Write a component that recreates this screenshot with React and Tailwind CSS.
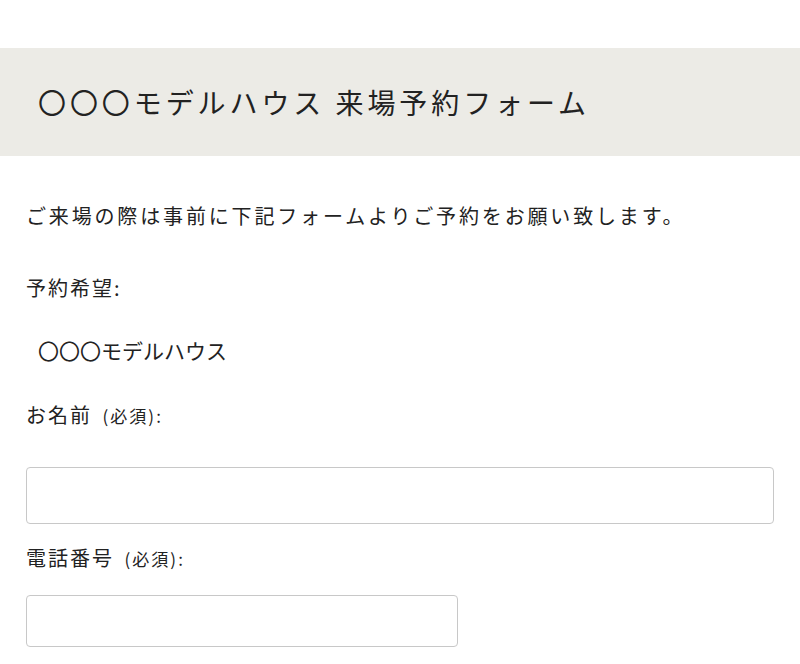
import React from 'react';

const font = { fontFamily: '"Noto Sans CJK JP", "Noto Sans", sans-serif' };

const Field = ({ label, className }) => (
    <div className={className}>
        <p className='text-[20px] leading-[30px] tracking-[0.1em]'>
            {label} <span className='ml-[4px] text-[17px] tracking-[0.12em]'>(必須):</span>
        </p>
    </div>
);

const App = () => {
    return (
        <div className='bg-white text-[#222] min-h-[664px]' style={font}>
            <div className='h-[48px]'></div>
            <div className='bg-[#ecebe6] h-[108px] flex items-center pl-[38px]'>
                <h1 className='text-[28px] tracking-[0.14em] font-normal'>〇〇〇モデルハウス 来場予約フォーム</h1>
            </div>
            <div className='px-[26px]'>
                <p className='mt-[45px] text-[20px] leading-[30px] tracking-[0.142em]'>
                    ご来場の際は事前に下記フォームよりご予約をお願い致します。
                </p>
                <p className='mt-[42px] text-[20px] leading-[30px] tracking-[0.1em]'>予約希望:</p>
                <p className='mt-[32px] pl-[12px] text-[21px] leading-[30px]'>〇〇〇モデルハウス</p>

                <Field label='お名前' className='mt-[35px]' />
                <input
                    type='text'
                    className='mt-[36px] block w-[748px] h-[57px] border border-[#c8c8c8] rounded-[4px] px-3 bg-white'
                />

                <Field label='電話番号' className='mt-[19px]' />
                <input
                    type='tel'
                    className='mt-[21px] block w-[432px] h-[52px] border border-[#c8c8c8] rounded-[4px] px-3 bg-white'
                />
            </div>
        </div>
    );
};

export default App;
